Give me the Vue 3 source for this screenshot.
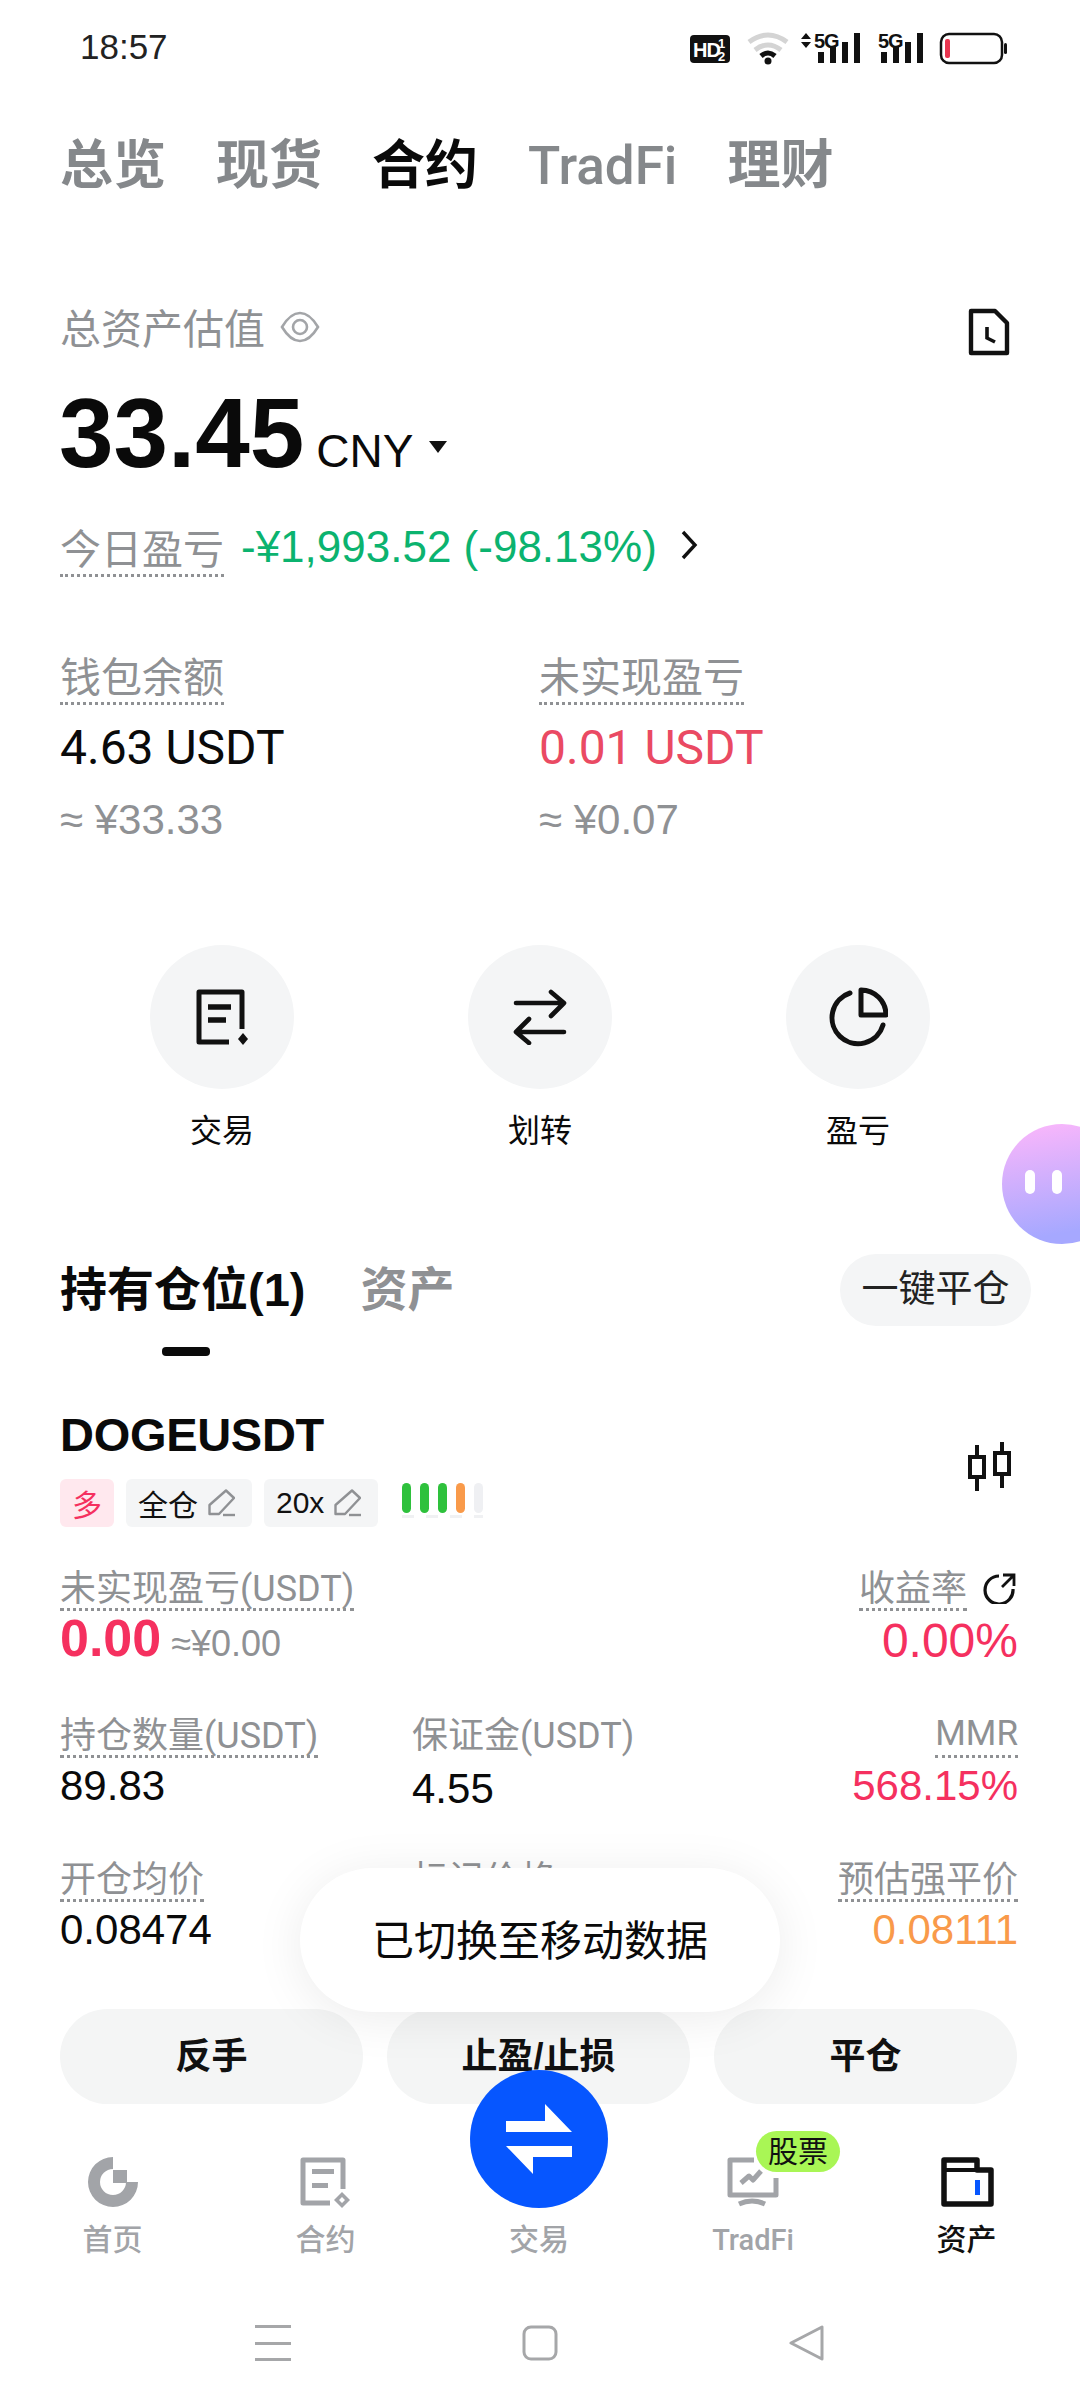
<script setup>
const tabs = [
  { t: '总览' }, { t: '现货' }, { t: '合约', on: true }, { t: 'TradFi', latin: true }, { t: '理财' }
]
const actions = ['交易', '划转', '盈亏']
</script>

<template>
  <div class="app">
    <header class="status">
      <span class="time">18:57</span>
      <svg class="status-icons" width="320" height="40" viewBox="0 0 320 40">
        <rect x="0" y="5" width="40" height="28" rx="4" fill="#111" />
        <text x="3" y="27" class="hd">HD</text>
        <text x="28" y="18" class="hdn">1</text>
        <text x="28" y="31" class="hdn">2</text>
        <g fill="none">
          <path d="M59 12 Q78 -2 97 12" stroke="#d4d4d4" stroke-width="5" />
          <path d="M65 20 Q78 10 91 20" stroke="#d4d4d4" stroke-width="5" />
          <path d="M71 26 Q78 20 85 26" stroke="#111" stroke-width="5" />
        </g>
        <circle cx="78" cy="31" r="3.5" fill="#111" />
        <path d="M111 9 L116 3 L121 9 Z M111 12 L121 12 L116 18 Z" fill="#111" />
        <text x="124" y="18" class="g5">5G</text>
        <g fill="#111">
          <rect x="128" y="22" width="6" height="11" />
          <rect x="140" y="17" width="6" height="16" />
          <rect x="152" y="12" width="6" height="21" />
          <rect x="164" y="3" width="6" height="30" />
        </g>
        <text x="188" y="18" class="g5">5G</text>
        <g fill="#111">
          <rect x="191" y="22" width="6" height="11" />
          <rect x="203" y="17" width="6" height="16" />
          <rect x="215" y="12" width="6" height="21" />
          <rect x="227" y="3" width="6" height="30" />
        </g>
        <rect x="251" y="4" width="61" height="29" rx="8" fill="none" stroke="#111" stroke-width="2.5" />
        <rect x="255" y="9" width="5" height="19" rx="2" fill="#e8354f" />
        <rect x="314" y="13" width="3" height="11" rx="1.5" fill="#111" />
      </svg>
    </header>

    <nav class="tabs">
      <span v-for="tab in tabs" :key="tab.t" class="tab" :class="{ on: tab.on, latin: tab.latin }">{{ tab.t }}</span>
    </nav>

    <section class="summary">
      <div class="total-row">
        <span class="total-label">总资产估值</span>
        <svg class="eye" width="40" height="32" viewBox="0 0 40 32" fill="none" stroke="#a3a5a8" stroke-width="2.6">
          <path d="M2 16 C8 6 13 2 20 2 C27 2 32 6 38 16 C32 26 27 30 20 30 C13 30 8 26 2 16 Z" />
          <circle cx="20" cy="16" r="7" />
        </svg>
        <svg class="doc" width="42" height="48" viewBox="0 0 42 48" fill="none" stroke="#111" stroke-width="4.4">
          <path d="M3 3 H27 L39 15 V45 H3 Z" stroke-linejoin="round" />
          <path d="M19 19 V30 L27 34" stroke-width="3.6" />
        </svg>
      </div>
      <div class="amount-row">
        <span class="amount">33.45</span>
        <span class="currency">CNY</span>
        <span class="caret"></span>
      </div>
      <div class="pnl-row">
        <span class="dotted pnl-label">今日盈亏</span>
        <span class="pnl-value">-¥1,993.52 (-98.13%)</span>
        <svg width="18" height="30" viewBox="0 0 18 30" fill="none" stroke="#111" stroke-width="3.4">
          <path d="M3 2 L15 15 L3 28" />
        </svg>
      </div>
      <div class="balances">
        <div class="bal">
          <span class="dotted bal-label">钱包余额</span>
          <span class="bal-value">4.63 USDT</span>
          <span class="bal-sub">≈ ¥33.33</span>
        </div>
        <div class="bal">
          <span class="dotted bal-label">未实现盈亏</span>
          <span class="bal-value red">0.01 USDT</span>
          <span class="bal-sub">≈ ¥0.07</span>
        </div>
      </div>
    </section>

    <section class="actions">
      <div v-for="(a, i) in actions" :key="a" class="action">
        <div class="circle">
          <svg v-if="i === 0" width="56" height="60" viewBox="0 0 56 60" fill="none" stroke="#111" stroke-width="5" stroke-linejoin="round">
            <path d="M35 55 H5 V5 H48 V42" />
            <path d="M14 20 H37 M14 33 H32" stroke-width="5.5" />
            <path d="M49 46 L54 52 L49 58 L44 52 Z" fill="#111" stroke="none" />
          </svg>
          <svg v-else-if="i === 1" width="56" height="56" viewBox="0 0 56 56" fill="none" stroke="#111" stroke-width="4.6" stroke-linecap="round" stroke-linejoin="round">
            <path d="M4 14 H51 M39 3 L52 14 L39 27" />
            <path d="M52 43 H5 M17 30 L4 43 L17 54" />
          </svg>
          <svg v-else width="60" height="60" viewBox="0 0 60 60" fill="none" stroke="#111" stroke-width="5">
            <path d="M22 6 A26 26 0 1 0 55 38" stroke-linecap="round" />
            <path d="M33 3 A25 25 0 0 1 58 28 H33 Z" stroke-linejoin="round" />
          </svg>
        </div>
        <span class="action-label">{{ a }}</span>
      </div>
    </section>

    <section class="pos-head">
      <div class="pos-tabs">
        <div class="pos-tab-on">
          <span>持有仓位(1)</span>
          <i class="pos-bar"></i>
        </div>
        <span class="pos-tab">资产</span>
      </div>
      <span class="close-all">一键平仓</span>
    </section>

    <section class="position">
      <div class="symbol-row">
        <div>
          <div class="symbol">DOGEUSDT</div>
          <div class="tags">
            <span class="tag long">多</span>
            <span class="tag">全仓
              <svg width="27" height="28" viewBox="0 0 27 28" fill="none" stroke="#8f9194" stroke-width="2.4" stroke-linejoin="round">
                <path d="M1.5 16 L18 1.5 L26 9 L11 25 H1.5 Z" /><path d="M15 26 H27" />
              </svg>
            </span>
            <span class="tag">20x
              <svg width="27" height="28" viewBox="0 0 27 28" fill="none" stroke="#8f9194" stroke-width="2.4" stroke-linejoin="round">
                <path d="M1.5 16 L18 1.5 L26 9 L11 25 H1.5 Z" /><path d="M15 26 H27" />
              </svg>
            </span>
            <span class="bars">
              <i class="g"></i><i class="g"></i><i class="g"></i><i class="o"></i><i class="e"></i>
            </span>
          </div>
        </div>
        <svg class="candles" width="46" height="50" viewBox="0 0 46 50" fill="none" stroke="#111" stroke-width="4">
          <path d="M10 3 V14 M10 36 V49" />
          <rect x="3" y="15" width="14" height="20" />
          <path d="M35 0 V10 M35 33 V46" />
          <rect x="28" y="11" width="14" height="21" />
        </svg>
      </div>

      <div class="pnl-line">
        <div>
          <span class="dotted m-label">未实现盈亏(USDT)</span>
          <div class="pnl-num"><b>0.00</b><span>≈¥0.00</span></div>
        </div>
        <div class="right">
          <div class="roi-head">
            <span class="dotted m-label">收益率</span>
            <svg class="roi-icon" width="34" height="32" viewBox="0 0 34 32" fill="none" stroke="#111" stroke-width="3.2">
              <path d="M17 4 A14 14 0 1 0 31 17" />
              <path d="M21 3 H32 V14 M32 3 L20 15" stroke-width="2.8" />
            </svg>
          </div>
          <div class="roi-val">0.00%</div>
        </div>
      </div>

      <div class="metrics">
        <div><span class="dotted m-label">持仓数量(USDT)</span><div class="m-val">89.83</div></div>
        <div><span class="m-label plain">保证金(USDT)</span><div class="m-val low">4.55</div></div>
        <div class="right"><span class="dotted m-label mmr">MMR</span><div class="m-val pink">568.15%</div></div>
      </div>
      <div class="metrics">
        <div><span class="dotted m-label">开仓均价</span><div class="m-val">0.08474</div></div>
        <div><span class="m-label plain">标记价格</span></div>
        <div class="right"><span class="dotted m-label">预估强平价</span><div class="m-val orange">0.08111</div></div>
      </div>

      <div class="btns">
        <span class="btn">反手</span>
        <span class="btn">止盈/止损</span>
        <span class="btn">平仓</span>
      </div>
    </section>

    <footer class="tabbar">
      <div class="nav-item">
        <svg width="52" height="52" viewBox="0 0 52 52" fill="#a2a4a8">
          <path d="M26 1 A25 25 0 1 0 51 26 H39 A13 13 0 1 1 26 13 Z" />
          <rect x="26" y="14" width="14" height="13" />
        </svg>
        <span>首页</span>
      </div>
      <div class="nav-item">
        <svg width="54" height="52" viewBox="0 0 54 52" fill="none" stroke="#a2a4a8" stroke-width="5" stroke-linejoin="round">
          <path d="M31 47 H4 V4 H44 V33" />
          <path d="M13 15.5 H35 M13 29.5 H29" />
          <path fill="#a2a4a8" fill-rule="evenodd" stroke="none" d="M43 36 L51 44 L43 52 L35 44 Z M43 41 L40 44 L43 47 L46 44 Z" />
        </svg>
        <span>合约</span>
      </div>
      <div class="nav-item">
        <div class="nav-spacer"></div>
        <span>交易</span>
      </div>
      <div class="nav-item">
        <svg width="54" height="52" viewBox="0 0 54 52" fill="none" stroke="#a2a4a8" stroke-width="5" stroke-linejoin="round">
          <path d="M28 4 H4 V39 H50 V22" />
          <path d="M15 27 L23 20 L27 24 L35 15" />
          <path d="M13 48 Q26 42 39 48" />
        </svg>
        <span class="nav-latin">TradFi</span>
      </div>
      <div class="nav-item on">
        <svg width="54" height="52" viewBox="0 0 54 52" fill="none" stroke="#111" stroke-width="5.5" stroke-linejoin="round">
          <path d="M4 4 H37 V14 H51 V48 H4 Z" />
          <path d="M4 14 H37" stroke-width="4" />
          <path d="M37.5 24 V39" stroke="#0656ff" stroke-width="5" />
        </svg>
        <span>资产</span>
      </div>
    </footer>

    <div class="sysnav">
      <svg width="36" height="36" viewBox="0 0 36 36" fill="#a6a7a9">
        <rect x="0" y="0" width="36" height="3" /><rect x="0" y="17" width="36" height="3" /><rect x="0" y="33" width="36" height="3" />
      </svg>
      <svg width="36" height="36" viewBox="0 0 36 36" fill="none" stroke="#a6a7a9" stroke-width="3">
        <rect x="2" y="2" width="32" height="32" rx="7" />
      </svg>
      <svg width="36" height="36" viewBox="0 0 36 36" fill="none" stroke="#a6a7a9" stroke-width="3" stroke-linejoin="round">
        <path d="M33 2 V34 L2 18 Z" />
      </svg>
    </div>

    <div class="floater"><i></i><i></i></div>
    <div class="toast">已切换至移动数据</div>
    <div class="fab">
      <svg width="66" height="70" viewBox="0 0 66 70" fill="#fff">
        <path d="M0 17 H39 V0 L66 28 H0 Z" />
        <path d="M66 42 H0 L27 70 V53 H66 Z" />
      </svg>
    </div>
    <div class="badge">股票</div>
  </div>
</template>

<style>
html, body { margin: 0; background: #fff; }
</style>

<style scoped>
.app {
  position: relative;
  width: 1080px;
  height: 2408px;
  overflow: hidden;
  background: #fff;
  color: #0a0a0a;
  font-family: "Liberation Sans", "Noto Sans CJK SC", sans-serif;
}
.status {
  height: 94px;
  display: flex;
  justify-content: space-between;
  align-items: flex-start;
  padding: 0 70px 0 80px;
}
.time { font-size: 35px; line-height: 94px; color: #222; }
.status-icons { margin-top: 30px; }
.hd { font: 700 20px "Liberation Sans", sans-serif; fill: #fff; letter-spacing: -1px; }
.hdn { font: 700 13px "Liberation Sans", sans-serif; fill: #fff; }
.g5 { font: 700 20px "Liberation Sans", sans-serif; fill: #111; letter-spacing: -1px; }
.tabs {
  display: flex;
  gap: 50px;
  padding: 40px 0 0 60px;
}
.tab { font-size: 53px; line-height: 64px; font-weight: 700; color: #85888b; }
.tab.latin { font-family: Roboto, sans-serif; font-weight: 500; }
.tab.on { color: #0a0a0a; }
.summary { padding: 108px 62px 0 60px; }
.total-row { display: flex; align-items: center; height: 48px; position: relative; }
.total-label { font-size: 41px; line-height: 48px; color: #8f9194; }
.eye { margin-left: 15px; margin-top: -6px; }
.doc { position: absolute; right: 8px; top: 2px; }
.amount-row { display: flex; align-items: baseline; margin-top: 37px; height: 84px; margin-left: -1px; }
.amount { font-size: 98px; line-height: 84px; font-weight: 700; color: #0a0a0a; }
.currency { font-size: 46px; margin-left: 12px; line-height: 84px; }
.caret {
  width: 0; height: 0; margin-left: 16px;
  border-left: 9px solid transparent;
  border-right: 9px solid transparent;
  border-top: 12px solid #111;
  align-self: center; margin-top: 28px;
}
.pnl-row { display: flex; align-items: flex-start; margin-top: 51px; gap: 17px; height: 51px; }
.dotted { border-bottom: 3px dotted #8f9194; display: inline-block; }
.pnl-label { font-size: 41px; line-height: 48px; color: #8f9194; }
.pnl-value { font-size: 44px; line-height: 42px; color: #0bb36f; }
.pnl-row svg { margin-left: 6px; margin-top: 4px; }
.balances { display: flex; margin-top: 77px; }
.bal { width: 480px; display: flex; flex-direction: column; align-items: flex-start; }
.bal-label { font-size: 41px; line-height: 48px; color: #8f9194; }
.bal-value { font-family: Roboto, sans-serif; font-size: 48px; line-height: 56px; margin-top: 15px; }
.bal-value.red { color: #ea4a63; }
.bal-sub { font-size: 42px; line-height: 48px; margin-top: 20px; color: #8f9194; }
.actions {
  display: grid;
  grid-template-columns: 318px 318px 318px;
  padding: 0 0 0 63px;
  margin-top: 101px;
}
.action { display: flex; flex-direction: column; align-items: center; }
.circle {
  width: 144px; height: 144px; border-radius: 50%;
  background: #f4f5f6;
  display: flex; align-items: center; justify-content: center;
}
.action-label { font-size: 32px; line-height: 42px; margin-top: 21px; }
.pos-head {
  display: flex; justify-content: space-between; align-items: flex-start;
  padding: 0 49px 0 60px;
  margin-top: 102px;
  height: 102px;
}
.pos-tabs { display: flex; gap: 55px; padding-top: 7px; }
.pos-tab-on { font-size: 47px; line-height: 58px; font-weight: 700; position: relative; height: 95px; }
.pos-bar {
  position: absolute; left: 102px; bottom: 0; width: 48px; height: 9px;
  background: #0a0a0a; border-radius: 4px;
}
.pos-tab { font-size: 47px; line-height: 58px; font-weight: 700; color: #8f9194; }
.close-all {
  width: 191px; height: 72px; border-radius: 36px; background: #f4f5f6;
  font-size: 37px; line-height: 72px; text-align: center; color: #222;
}
.position { padding: 0 62px 0 60px; margin-top: 55px; }
.symbol-row { display: flex; justify-content: space-between; align-items: center; }
.symbol { font-size: 47px; line-height: 48px; font-weight: 700; letter-spacing: -0.3px; }
.tags { display: flex; gap: 12px; margin-top: 20px; align-items: flex-start; }
.tag {
  height: 48px; border-radius: 6px; background: #f4f5f6;
  display: flex; align-items: center; gap: 10px; padding: 0 17px 0 12px;
  font-size: 30px; color: #111;
}
.tag.long { background: #ffe8ee; color: #f5305f; width: 54px; justify-content: center; box-sizing: border-box; padding: 0; }
.bars {
  display: flex; gap: 9px; margin-left: 12px; padding: 4px 0 5px; height: 30px;
  background: repeating-linear-gradient(90deg, #f0f1f3 0 12px, transparent 12px 24px) left bottom / 98px 3px no-repeat;
}
.bars i { width: 9px; height: 30px; border-radius: 5px; }
.bars .g { background: #2ec13c; }
.bars .o { background: #f99a4a; }
.bars .e { background: #eff0f3; }
.candles { margin-top: -4px; margin-right: 5px; }
.right { text-align: right; display: flex; flex-direction: column; align-items: flex-end; }
.pnl-line { display: flex; justify-content: space-between; margin-top: 43px; height: 98px; }
.m-label { font-family: Roboto, "Noto Sans CJK SC", sans-serif; font-size: 36px; line-height: 38px; color: #8f9194; }
.m-label.plain { display: block; }
.m-label.mmr { font-size: 35px; line-height: 34px; padding-bottom: 4px; }
.pnl-num { display: flex; align-items: baseline; gap: 10px; margin-top: 2px; }
.pnl-num b { font-size: 52px; line-height: 50px; color: #f5305f; font-weight: 700; }
.pnl-num span { font-size: 36px; color: #8f9194; }
.roi-head { display: flex; align-items: flex-start; gap: 15px; }
.roi-icon { margin-top: 2px; margin-right: 2px; }
.roi-val { font-size: 48px; line-height: 54px; color: #f5305f; margin-top: 3px; }
.metrics { display: grid; grid-template-columns: 352px 1fr auto; margin-top: 49px; height: 95px; }
.m-val { font-size: 42px; line-height: 46px; margin-top: 5px; }
.m-val.low { margin-top: 11px; }
.m-val.pink { color: #f5305f; }
.m-val.orange { color: #f99a4a; }
.btns { display: grid; grid-template-columns: 303px 303px 303px; gap: 24px; margin-top: 53px; }
.btn {
  height: 95px; border-radius: 48px; background: #f4f5f5;
  font-size: 36px; line-height: 95px; text-align: center; font-weight: 700; color: #111;
}
.tabbar {
  display: grid;
  grid-template-columns: 213px 213px 214px 214px 213px;
  padding: 0 7px 0 6px;
  margin-top: 52px;
}
.nav-item { display: flex; flex-direction: column; align-items: center; color: #a2a4a8; font-size: 30px; line-height: 40px; }
.nav-item span { margin-top: 12px; font-weight: 500; }
.nav-item .nav-latin { font-family: Roboto, sans-serif; font-size: 29px; }
.nav-item.on { color: #111; }
.nav-spacer { height: 52px; }
.sysnav {
  display: flex; justify-content: space-between;
  padding: 0 255px;
  margin-top: 65px;
}
.floater {
  position: absolute; left: 1002px; top: 1124px; width: 120px; height: 120px;
  border-radius: 60px; box-sizing: border-box;
  background: linear-gradient(170deg, #fdb7fb, #a6a8ff 85%);
  display: flex; gap: 17px; padding: 46px 0 0 23px;
}
.floater i { width: 10px; height: 24px; border-radius: 5px; background: #fff; }
.toast {
  position: absolute; left: 300px; top: 1868px; width: 480px; height: 144px;
  border-radius: 72px; background: #fff;
  box-shadow: 0 6px 50px rgba(0, 0, 0, 0.08);
  font-size: 42px; line-height: 148px; text-align: center; color: #0a0a0a;
}
.fab {
  position: absolute; left: 470px; top: 2070px; width: 138px; height: 138px;
  border-radius: 50%; background: #0656ff;
  display: flex; align-items: center; justify-content: center;
}
.badge {
  position: absolute; left: 756px; top: 2131px; width: 84px; height: 41px;
  border-radius: 21px; background: #a9f655;
  font-size: 30px; line-height: 41px; text-align: center; color: #111;
}
</style>
